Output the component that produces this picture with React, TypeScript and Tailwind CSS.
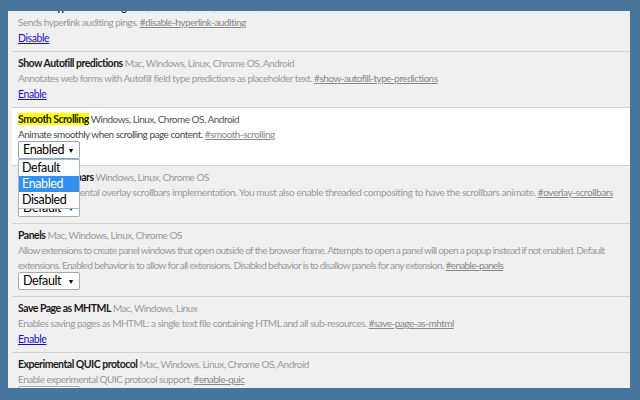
import type { ReactNode } from 'react';

const FONT = "font-['Lato','Liberation_Sans',sans-serif]";

function Select({ value, focused }: { value: string; focused?: boolean }) {
  return (
    <div
      className={`flex h-[18px] w-[62px] items-center justify-between rounded-[2px] border bg-white pl-[4px] pr-[5px] text-[12.5px] leading-none tracking-[-0.4px] text-black ${
        focused ? 'border-[#86a6d6]' : 'border-[#a9a9a9]'
      }`}
    >
      <span>{value}</span>
      <span className="text-[7px]">▼</span>
    </div>
  );
}

function Popup() {
  const opts = ['Default', 'Enabled', 'Disabled'];
  return (
    <div className="absolute left-0 top-[18px] z-10 w-[62px] border border-[#a9b6c9] bg-white text-[12.5px] tracking-[-0.4px] text-black">
      {opts.map((o) => (
        <div
          key={o}
          className={`h-[16px] pl-[3px] leading-[16px] ${o === 'Enabled' ? 'bg-[#3390f0] text-white' : ''}`}
        >
          {o}
        </div>
      ))}
    </div>
  );
}

type Flag = {
  name: string;
  platforms: string;
  desc: ReactNode;
  hash: string;
  link?: string;
  select?: string;
  active?: boolean;
  open?: boolean;
  track?: string;
};

const FLAGS: Flag[] = [
  {
    name: 'Disable hyperlink auditing',
    platforms: 'Mac, Windows, Linux, Chrome OS, Android',
    desc: 'Sends hyperlink auditing pings.',
    hash: 'disable-hyperlink-auditing',
    link: 'Disable',
  },
  {
    name: 'Show Autofill predictions',
    platforms: 'Mac, Windows, Linux, Chrome OS, Android',
    desc: 'Annotates web forms with Autofill field type predictions as placeholder text.',
    hash: 'show-autofill-type-predictions',
    link: 'Enable',
  },
  {
    name: 'Smooth Scrolling',
    platforms: 'Windows, Linux, Chrome OS, Android',
    desc: 'Animate smoothly when scrolling page content.',
    hash: 'smooth-scrolling',
    select: 'Enabled',
    active: true,
    open: true,
  },
  {
    name: 'Overlay Scrollbars',
    platforms: 'Windows, Linux, Chrome OS',
    desc: 'Enable experimental overlay scrollbars implementation. You must also enable threaded compositing to have the scrollbars animate.',
    hash: 'overlay-scrollbars',
    select: 'Default',
    track: 'whitespace-nowrap tracking-[-0.4px]',
  },
  {
    name: 'Panels',
    platforms: 'Mac, Windows, Linux, Chrome OS',
    desc: (
      <>
        Allow extensions to create panel windows that open outside of the browser frame. Attempts to open a panel will open a popup instead if not enabled. Default
        <br />
        extensions. Enabled behavior is to allow for all extensions. Disabled behavior is to disallow panels for any extension.
      </>
    ),
    hash: 'enable-panels',
    select: 'Default',
    track: 'whitespace-nowrap tracking-[-0.66px]',
  },
  {
    name: 'Save Page as MHTML',
    platforms: 'Mac, Windows, Linux',
    desc: 'Enables saving pages as MHTML: a single text file containing HTML and all sub-resources.',
    hash: 'save-page-as-mhtml',
    link: 'Enable',
  },
  {
    name: 'Experimental QUIC protocol',
    platforms: 'Mac, Windows, Linux, Chrome OS, Android',
    desc: 'Enable experimental QUIC protocol support.',
    hash: 'enable-quic',
    select: 'Default',
  },
];

function FlagItem({ f, first }: { f: Flag; first?: boolean }) {
  return (
    <div
      className={`pl-[6px] pr-[3px] pt-[4px] ${first ? '' : 'border-t border-[#d2d2d2]'} ${
        f.active ? 'bg-white' : ''
      } ${f.select ? 'pb-[6px]' : 'pb-[5px]'}`}
    >
      <div className="whitespace-nowrap leading-[15px]">
        <span className={`text-[10.5px] font-bold tracking-[-0.5px] text-[#1a1a1a] ${f.active ? 'bg-[#ffff00]' : ''}`}>
          {f.name}
        </span>{' '}
        <span className={f.active ? 'text-[#555]' : 'text-[#999]'}>{f.platforms}</span>
      </div>
      <div className={`leading-[15px] ${f.active ? 'text-[#4a4a4a]' : 'text-[#999]'} ${f.track ?? ''}`}>
        {f.desc}{' '}
        <a className="text-[#888] underline">#{f.hash}</a>
      </div>
      {f.link && (
        <div className="mt-[1px] leading-[15px]">
          <a className="text-[10.5px] tracking-[-0.4px] text-[#1a0dd0] underline">{f.link}</a>
        </div>
      )}
      {f.select && (
        <div className="relative -mt-[1px] w-[62px]">
          <Select value={f.select} focused={f.active} />
          {f.open && <Popup />}
        </div>
      )}
    </div>
  );
}

export default function App() {
  return (
    <div className={`h-[400px] w-[640px] bg-[#47769c] pb-[12px] pl-[8px] pr-[10px] pt-[11px] ${FONT}`}>
      <div className="h-full overflow-hidden bg-[#f0f0f0] pl-[4px] text-[10px] tracking-[-0.5px]">
        <div className="-mt-[15px]">
          {FLAGS.map((f, i) => (
            <FlagItem key={f.name} f={f} first={i === 0} />
          ))}
        </div>
      </div>
    </div>
  );
}
